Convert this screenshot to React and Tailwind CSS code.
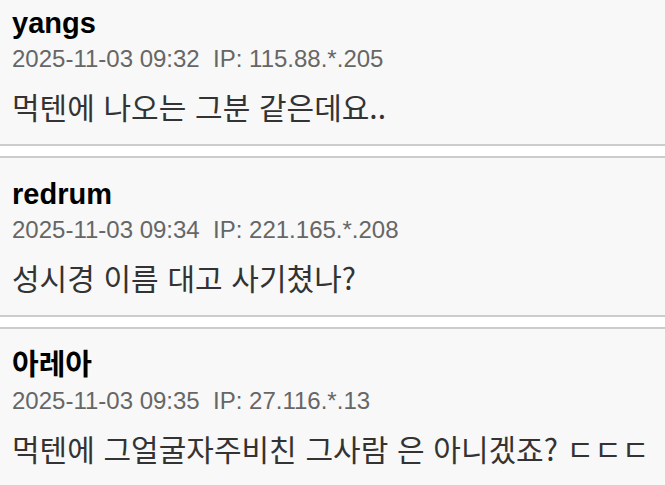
import React from 'react'

const comments = [
  { id: 1, name: 'yangs', date: '2025-11-03 09:32', ip: '115.88.*.205', text: '먹텐에 나오는 그분 같은데요..' },
  { id: 2, name: 'redrum', date: '2025-11-03 09:34', ip: '221.165.*.208', text: '성시경 이름 대고 사기쳤나?' },
  { id: 3, name: '아레아', date: '2025-11-03 09:35', ip: '27.116.*.13', text: '먹텐에 그얼굴자주비친 그사람 은 아니겠죠? ㄷㄷㄷ' },
]

const font = { fontFamily: '"Liberation Sans", Arial, "Noto Sans CJK KR", sans-serif' }
const bodyFont = { fontFamily: '"Noto Sans CJK KR", "Liberation Sans", sans-serif' }

export default function App(){
  return (
    <div className="min-h-screen bg-white overflow-hidden" style={font}>
      <div className="-mt-[15px]">
        {comments.map(c => (
          <div key={c.id} className="mb-[10px] border-y-2 border-[#cccccc] bg-[#f8f8f8] px-3 pt-[17px] pb-[18px]">
            <div className="text-[29px] leading-[38px] font-bold text-black">{c.name}</div>
            <div className="text-[24px] leading-[34px] text-[#666666]">
              {c.date}&nbsp; IP: {c.ip}
            </div>
            <div className="mt-[10px] text-[30px] leading-[40px] text-[#333333] [word-spacing:2px]" style={bodyFont}>{c.text}</div>
          </div>
        ))}
      </div>
    </div>
  )
}
